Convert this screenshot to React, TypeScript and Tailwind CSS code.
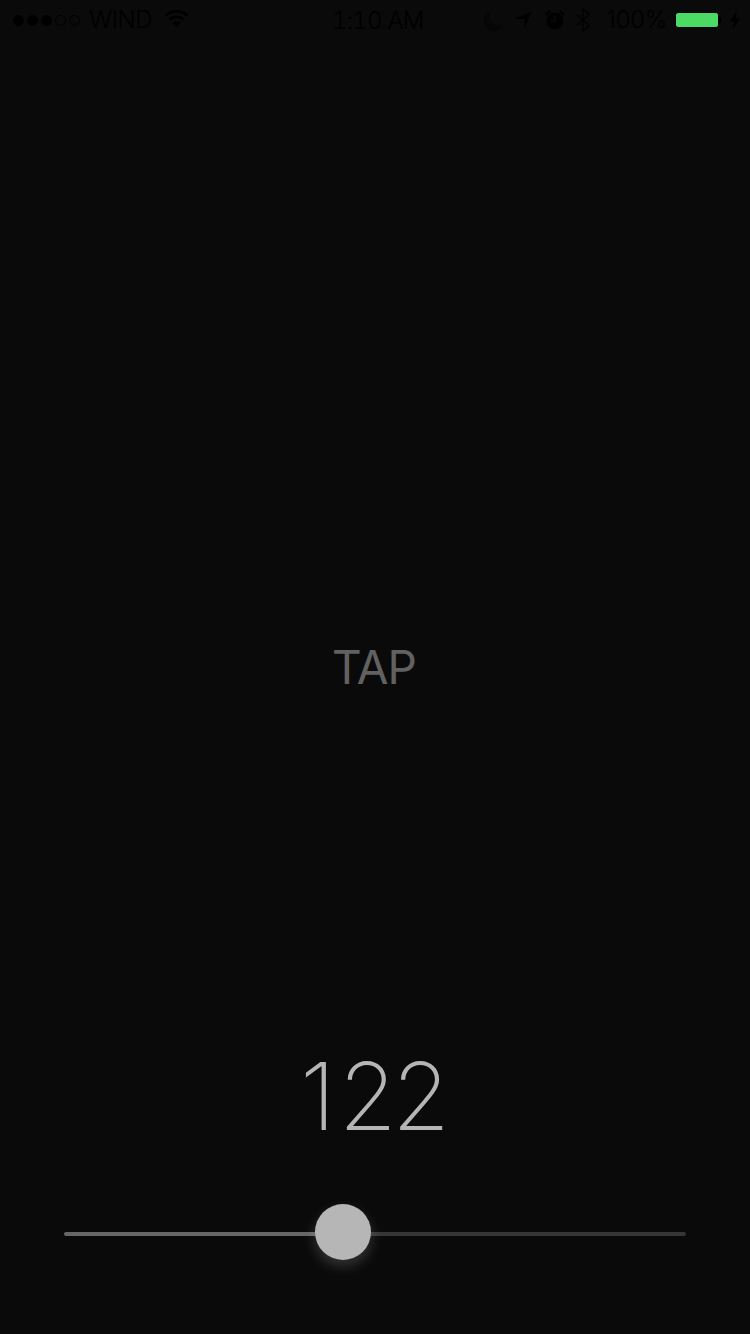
import React from 'react';

const sans = 'font-["Inter","Liberation_Sans",sans-serif]';

const Dot = ({ filled }: { filled: boolean }) => (
  <span className={`h-[11px] w-[11px] rounded-full border border-black ${filled ? 'bg-black' : ''}`} />
);

const StatusBar: React.FC = () => (
  <div className={`relative flex h-[40px] items-center justify-between pl-[13px] pr-[9px] text-[24px] font-normal leading-none text-black ${sans}`}>
    <div className="flex items-center">
      <div className="flex gap-[3px]">
        {[true, true, true, false, false].map((f, i) => (
          <Dot key={i} filled={f} />
        ))}
      </div>
      <span className="ml-[9px] font-light tracking-[-0.5px]">WIND</span>
      <svg className="ml-[12px] mt-[-3px] shrink-0" width="25" height="19" viewBox="0 0 25 19" fill="none" stroke="#000" strokeWidth="2.6">
        <path d="M1.5 6.5C7.5 1 17.5 1 23.5 6.5" />
        <path d="M5.5 10.5C9.5 7 15.5 7 19.5 10.5" />
        <path d="M12.5 18L8.5 13.6C10.8 11.8 14.2 11.8 16.5 13.6Z" fill="#000" stroke="none" />
      </svg>
    </div>
    <span className="absolute left-[332px] top-[9px] font-light tabular-nums tracking-[-0.8px]">1:10 AM</span>
    <div className="flex items-center">
      <svg className="shrink-0" width="20" height="22" viewBox="0 0 20 22" fill="#060606">
        <path d="M7 2a10 10 0 1 0 12 13A9 9 0 0 1 7 2Z" />
      </svg>
      <svg className="ml-[10px] shrink-0" width="18" height="18" viewBox="0 0 18 18" fill="#000">
        <path d="M17.5 0.5L10.5 17.5V8L0.5 8Z" />
      </svg>
      <svg className="ml-[13px] shrink-0" width="20" height="22" viewBox="0 0 20 22" fill="none">
        <circle cx="10" cy="12" r="8.5" fill="#000" />
        <path d="M10 6.5V12.5H6" stroke="#0a0a0a" strokeWidth="1.6" />
        <path d="M1 6L5 2M19 6L15 2" stroke="#000" strokeWidth="2.4" />
      </svg>
      <svg className="ml-[11px] shrink-0" width="14" height="24" viewBox="0 0 14 24" fill="none" stroke="#000" strokeWidth="1.2">
        <path d="M1 6.5L13 17.5L7 23V1L13 6.5L1 17.5" />
      </svg>
      <span className="ml-[17px] font-light tracking-[-0.3px]">100%</span>
      <div className="ml-[8px] h-[16px] w-[44px] shrink-0 rounded-[3px] border border-black bg-[#4cd964]" />
      <span className="h-[7px] w-[2px] shrink-0 rounded-r-full bg-black" />
      <svg className="ml-[8px] shrink-0" width="12" height="18" viewBox="0 0 12 20" fill="#000">
        <path d="M8 0L0.5 11.5H5L3.5 20L11.5 8H7Z" />
      </svg>
    </div>
  </div>
);

export default function App() {
  return (
    <div className={`flex h-[1334px] w-[750px] flex-col overflow-hidden bg-[#0a0a0a] ${sans}`}>
      <StatusBar />
      <div className="flex h-[1010px] flex-col pt-[598px] text-center">
        <span className="pr-[2px] text-[46px] font-normal leading-[58px] tracking-[-1px] text-[#616161]">TAP</span>
        <span className="mt-[343px] text-[94px] font-extralight leading-[114px] text-[#b5b5b5]">
          <span className="tracking-[3px]">1</span>
          <span className="tracking-[-5px]">2</span>2
        </span>
      </div>
      <div className="relative mx-[64px] mt-[182px] flex h-[4px] overflow-visible">
        <div className="w-[279px] rounded-l-full bg-[#666666]" />
        <div className="flex-1 rounded-r-full bg-[#363636]" />
        <div className="absolute left-[251px] top-[-28px] h-[56px] w-[56px] rounded-full bg-[#b6b6b6] shadow-[0_6px_14px_rgba(255,255,255,0.18)]" />
      </div>
    </div>
  );
}
